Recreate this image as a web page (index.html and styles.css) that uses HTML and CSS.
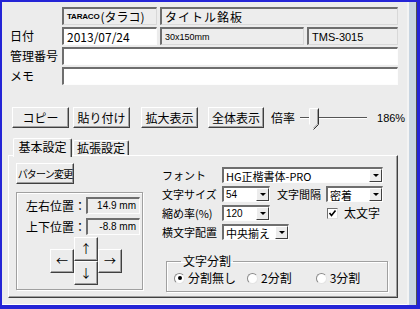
FILE: index.html
```html
<!DOCTYPE html>
<html lang="ja">
<head>
<meta charset="utf-8">
<link rel="stylesheet" href="styles.css">
</head>
<body>
<div class="frame">
  <div class="main">
    <div class="head">
      <div class="lbl"></div>
      <div class="fld ro"><span class="tiny">TARACO</span>(タラコ)</div>
      <div class="fld ro span2 title">タイトル銘板</div>
      <div class="lbl">日付</div>
      <div class="fld">2013/07/24</div>
      <div class="fld ro small">30x150mm</div>
      <div class="fld ro mid">TMS-3015</div>
      <div class="lbl">管理番号</div>
      <div class="fld span3"></div>
      <div class="lbl">メモ</div>
      <div class="fld span3"></div>
    </div>

    <div class="toolbar">
      <div class="btn w57">コピー</div>
      <div class="btn w57 ml4">貼り付け</div>
      <div class="btn w57 ml11">拡大表示</div>
      <div class="btn w56 ml10">全体表示</div>
      <span class="zoomlbl">倍率</span>
      <svg class="slider" width="70" height="24" viewBox="0 0 70 24">
        <line x1="0" y1="11.5" x2="67" y2="11.5" stroke="#555" stroke-width="1"/>
        <line x1="0" y1="12.5" x2="67" y2="12.5" stroke="#fff" stroke-width="1"/>
        <polygon points="9.5,2.5 18.5,2.5 18.5,18.5 14,23 9.5,18.5" fill="#ececec"/>
        <polyline points="9.5,18.5 9.5,2.5 18.5,2.5" fill="none" stroke="#fff" stroke-width="1"/>
        <polyline points="18.5,2.5 18.5,18.5 13.5,23.5" fill="none" stroke="#333" stroke-width="1"/>
        <polyline points="17.5,3.5 17.5,18 13.5,22" fill="none" stroke="#a0a0a0" stroke-width="1"/>
      </svg>
      <span class="pct">186%</span>
    </div>

    <div class="tabs">
      <div class="tab active">基本設定</div>
      <div class="tab">拡張設定</div>
    </div>

    <div class="panel">
      <div class="leftcol">
        <div class="btn pat">パターン変更</div>
        <div class="pos">
          <div class="vrow"><span class="vlbl">左右位置：</span><span class="val">14.9 mm</span></div>
          <div class="vrow"><span class="vlbl">上下位置：</span><span class="val">-8.8 mm</span></div>
          <div class="arrows">
            <div class="btn arr up">↑</div>
            <div class="btn arr left">←</div>
            <div class="btn arr right">→</div>
            <div class="btn arr down">↓</div>
          </div>
        </div>
      </div>

      <div class="rightcol">
        <div class="frow">
          <span class="flbl">フォント</span>
          <div class="sel w161"><span class="stext">HG正楷書体-PRO</span><span class="dd"><i></i></span></div>
        </div>
        <div class="frow">
          <span class="flbl">文字サイズ</span>
          <div class="sel w48"><span class="stext sm">54</span><span class="dd"><i></i></span></div>
          <span class="flbl2">文字間隔</span>
          <div class="sel w57"><span class="stext">密着</span><span class="dd"><i></i></span></div>
        </div>
        <div class="frow">
          <span class="flbl">縮め率(%)</span>
          <div class="sel w48"><span class="stext sm">120</span><span class="dd"><i></i></span></div>
          <span class="chk"><svg width="9" height="9" viewBox="0 0 9 9"><polyline points="1.5,4 3.5,6.5 7.5,1.5" fill="none" stroke="#000" stroke-width="1.6"/></svg></span>
          <span class="chklbl">太文字</span>
        </div>
        <div class="frow">
          <span class="flbl">横文字配置</span>
          <div class="sel w67"><span class="stext">中央揃え</span><span class="dd"><i></i></span></div>
        </div>

        <fieldset class="split">
          <legend>文字分割</legend>
          <div class="radios">
            <span class="radio on"></span><span class="rlbl">分割無し</span>
            <span class="radio r2"></span><span class="rlbl">2分割</span>
            <span class="radio r3"></span><span class="rlbl">3分割</span>
          </div>
        </fieldset>
      </div>
    </div>
  </div>
  <div class="strip"></div>
</div>
</body>
</html>
```

FILE: styles.css
```css
* { box-sizing: border-box; }

html, body {
  margin: 0;
  padding: 0;
  background: #ececec;
}

body {
  font-family: "Noto Sans CJK JP", sans-serif;
  font-size: 12px;
  line-height: 14px;
  color: #000;
}

.frame {
  width: 420px;
  height: 309px;
  border-style: solid;
  border-color: #2424d6;
  border-width: 2px 3px 4px 2px;
  display: flex;
  background: #ececec;
}

.main {
  flex: 1;
  padding: 5px 0 0 8px;
  display: flex;
  flex-direction: column;
  border-bottom: 1px solid #fff;
}

.strip {
  width: 10px;
  background: #c8d5e1;
  border-left: 2px solid #f4f4f4;
  border-right: 1px solid #505050;
}

/* header grid */
.head {
  display: grid;
  grid-template-columns: 49px 95px 144px 91px;
  grid-auto-rows: 18px;
  column-gap: 3px;
  row-gap: 2px;
}

.lbl {
  display: flex;
  align-items: center;
  white-space: nowrap;
}

.fld {
  display: flex;
  align-items: center;
  padding-left: 3px;
  background: #fff;
  border-top: 2px solid #6e6e6e;
  border-left: 2px solid #6e6e6e;
  border-right: 1px solid #fdfdfd;
  border-bottom: 1px solid #fdfdfd;
  white-space: nowrap;
  overflow: hidden;
}

.fld.ro {
  background: #ededed;
  border-right-color: #d8d8d8;
  border-bottom-color: #d8d8d8;
}

.span2 { grid-column: span 2; }
.span3 { grid-column: span 3; }

.tiny {
  font-family: "Liberation Sans", sans-serif;
  font-size: 8px;
  font-weight: bold;
  letter-spacing: -0.2px;
  margin-right: 1px;
}

.title { letter-spacing: 1px; }

.small {
  font-family: "Liberation Sans", sans-serif;
  font-size: 9px;
}

.mid {
  font-family: "Liberation Sans", sans-serif;
  font-size: 11px;
}

/* buttons */
.btn {
  display: flex;
  align-items: center;
  justify-content: center;
  height: 21px;
  background: #ececec;
  border-top: 1px solid #fff;
  border-left: 1px solid #fff;
  border-right: 1px solid #404040;
  border-bottom: 1px solid #404040;
  box-shadow: inset -1px -1px 0 #a0a0a0;
  white-space: nowrap;
}

.toolbar {
  display: flex;
  align-items: center;
  height: 21px;
  margin-top: 22px;
  margin-left: 2px;
}

.w57 { width: 57px; }
.w56 { width: 56px; }
.ml4 { margin-left: 4px; }
.ml11 { margin-left: 11px; }
.ml10 { margin-left: 10px; }

.zoomlbl { margin-left: 7px; }

.slider {
  margin-left: 5px;
  display: block;
}

.pct {
  margin-left: 7px;
  font-family: "Liberation Sans", sans-serif;
  font-size: 11px;
}

/* tabs */
.tabs {
  display: flex;
  align-items: flex-end;
  height: 19px;
  margin-top: 8px;
  margin-left: 3px;
}

.tab {
  display: flex;
  align-items: center;
  justify-content: center;
  height: 15px;
  width: 56px;
  margin-left: 1px;
  background: #ececec;
  border-top: 1px solid #fff;
  border-left: 1px solid #fff;
  border-right: 1px solid #404040;
  box-shadow: inset -1px 0 0 #a0a0a0;
  border-radius: 2px 2px 0 0;
}

.tab.active {
  width: 59px;
  height: 19px;
  margin-left: 0;
  margin-bottom: -2px;
  padding-bottom: 2px;
  position: relative;
  z-index: 1;
}

/* panel */
.panel {
  margin-left: -2px;
  width: 390px;
  height: 143px;
  background: #ececec;
  border-top: 1px solid #fff;
  border-left: 1px solid #fff;
  border-right: 1px solid #404040;
  border-bottom: 1px solid #404040;
  box-shadow: inset -1px -1px 0 #a0a0a0;
  display: flex;
  padding: 7px 0 0 7px;
}

.leftcol {
  width: 127px;
  display: flex;
  flex-direction: column;
}

.pat {
  width: 58px;
  font-size: 10px;
  letter-spacing: -0.8px;
}

.pos {
  margin-top: 8px;
  width: 127px;
  height: 98px;
  border: 1px solid #a0a0a0;
  box-shadow: inset 1px 1px 0 #fff, 1px 1px 0 #fff;
  padding: 4px 0 0 9px;
  display: flex;
  flex-direction: column;
  gap: 4px;
}

.vrow {
  display: flex;
  align-items: center;
  height: 17px;
}

.vlbl { width: 60px; white-space: nowrap; }

.val {
  width: 54px;
  height: 17px;
  display: flex;
  align-items: center;
  justify-content: flex-end;
  padding-right: 3px;
  background: #ededed;
  border-top: 2px solid #6e6e6e;
  border-left: 2px solid #6e6e6e;
  border-right: 1px solid #fdfdfd;
  border-bottom: 1px solid #fdfdfd;
  font-family: "Liberation Sans", sans-serif;
  font-size: 10px;
}

.arrows {
  margin-top: -2px;
  margin-left: 24px;
  display: grid;
  grid-template-columns: repeat(3, 24px);
  grid-template-rows: repeat(4, 12px);
}

.arr {
  height: 24px;
  font-size: 12px;
}

.arr.up { grid-column: 2; grid-row: 1 / 3; }
.arr.left { grid-column: 1; grid-row: 2 / 4; }
.arr.right { grid-column: 3; grid-row: 2 / 4; }
.arr.down { grid-column: 2; grid-row: 3 / 5; }

/* right column */
.rightcol {
  margin-left: 19px;
  padding-top: 4px;
  display: flex;
  flex-direction: column;
  gap: 3px;
}

.frow {
  display: flex;
  align-items: center;
  height: 16px;
}

.flbl {
  width: 60px;
  white-space: nowrap;
  font-size: 11px;
}

.flbl2 {
  margin-left: 7px;
  width: 49px;
  white-space: nowrap;
  font-size: 11px;
}

.sel {
  display: flex;
  align-items: stretch;
  height: 16px;
  background: #fff;
  border-top: 2px solid #6e6e6e;
  border-left: 2px solid #6e6e6e;
  border-right: 1px solid #fdfdfd;
  border-bottom: 1px solid #fdfdfd;
}

.w161 { width: 161px; }
.w48 { width: 48px; }
.w57 { width: 57px; }
.w67 { width: 67px; }

.stext {
  flex: 1;
  display: flex;
  align-items: center;
  padding-left: 2px;
  white-space: nowrap;
  overflow: hidden;
  font-size: 11px;
}

.stext.sm {
  font-family: "Liberation Sans", sans-serif;
  font-size: 10px;
}

.dd {
  width: 13px;
  flex: none;
  background: #ececec;
  border-top: 1px solid #fff;
  border-left: 1px solid #fff;
  border-right: 1px solid #404040;
  border-bottom: 1px solid #404040;
  display: flex;
  align-items: center;
  justify-content: center;
}

.dd i {
  display: block;
  width: 0;
  height: 0;
  border-left: 3px solid transparent;
  border-right: 3px solid transparent;
  border-top: 3px solid #000;
}

.chk {
  margin-left: 57px;
  width: 11px;
  height: 11px;
  background: #fff;
  border-top: 1px solid #6e6e6e;
  border-left: 1px solid #6e6e6e;
  border-right: 1px solid #e0e0e0;
  border-bottom: 1px solid #e0e0e0;
  display: flex;
  align-items: center;
  justify-content: center;
}

.chk svg { display: block; }

.chklbl { margin-left: 6px; }

.split {
  margin: 11px 0 0 4px;
  width: 222px;
  height: 38px;
  border: 1px solid #a0a0a0;
  box-shadow: inset 1px 1px 0 #fff, 1px 1px 0 #fff;
  padding: 0 0 0 7px;
}

.split legend {
  margin-left: 7px;
  padding: 0 2px;
  line-height: 14px;
}

.radios {
  display: flex;
  align-items: center;
  height: 14px;
  margin-top: 3px;
}

.radio {
  width: 11px;
  height: 11px;
  border-radius: 50%;
  background: #fff;
  border-top: 1px solid #8a8a8a;
  border-left: 1px solid #8a8a8a;
  border-right: 1px solid #e4e4e4;
  border-bottom: 1px solid #e4e4e4;
  display: flex;
  align-items: center;
  justify-content: center;
}

.radio.on::after {
  content: "";
  width: 4px;
  height: 4px;
  border-radius: 50%;
  background: #000;
}

.rlbl { margin-left: 3px; white-space: nowrap; }

.radio.r2 { margin-left: 11px; }
.radio.r3 { margin-left: 24px; }
```
